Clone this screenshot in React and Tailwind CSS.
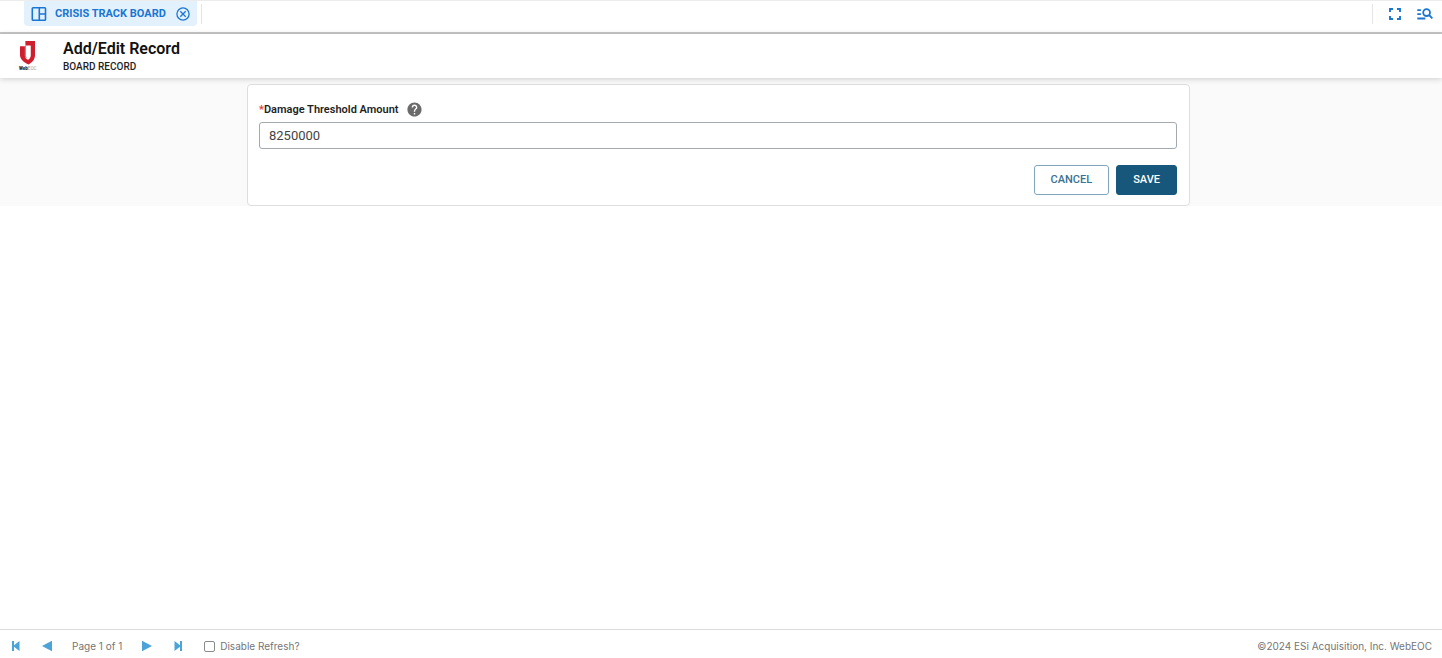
import React from "react";

function BoardIcon() {
  return (
    <svg viewBox="0 0 16 16" className="size-4" fill="none" stroke="currentColor" strokeWidth="1.6" aria-hidden="true">
      <rect x="1.3" y="1.8" width="13.2" height="12.4" rx="0.8" />
      <path d="M8.300 1.800v12.400M8.300 8h6.200" />
    </svg>
  );
}

function CloseIcon() {
  return (
    <svg viewBox="0 0 14 14" className="size-3.5" fill="none" stroke="currentColor" strokeWidth="1.3" aria-hidden="true">
      <circle cx="7" cy="7" r="6.1" />
      <path d="M4.3 4.3l5.4 5.4M9.7 4.3L4.3 9.7" />
    </svg>
  );
}

function FullscreenIcon() {
  return (
    <svg viewBox="0 0 12 12" className="size-3" fill="none" stroke="currentColor" strokeWidth="1.9" aria-hidden="true">
      <path d="M1 4V1h3M8 1h3v3M11 8v3H8M4 11H1V8" />
    </svg>
  );
}

function SearchListIcon() {
  return (
    <svg viewBox="0 0 16 12" className="h-3 w-4" fill="none" stroke="currentColor" strokeWidth="1.8" aria-hidden="true">
      <path d="M0.3 2.200h3.600M0.3 6.200h3.600M0.3 10.500h8" />
      <circle cx="9.600" cy="4.600" r="3.400" />
      <path d="M12 7l3.400 3.400" />
    </svg>
  );
}

function Logo() {
  return (
    <svg viewBox="0 0 20 30" className="h-[30px] w-5" role="img" aria-label="WebEOC">
      <path
        d="M7.400 0H17v14.200c0 4-2.800 7.300-6.600 9.200C5.200 21.200 2 17.800 2 13.700V5.200h4.900v9.300c0 1.800 1.100 3.300 3 4.200 1.800-.9 2.700-2.300 2.700-4.200V4.600H7.400z"
        fill="#cf1f2f"
      />
      <path d="M7.100 5h5.300v9.600c0 1.700-.9 3.100-2.500 4-1.800-.9-2.800-2.300-2.800-4.100z" fill="#fff" />
      <path d="M7.400 4.700v9.600c0 1.400.4 2.200 1.200 3" fill="none" stroke="#cf1f2f" strokeWidth="0.7" />
      <text x="1" y="28.500" fontSize="4.500" fontWeight="900" fill="#222" fontFamily="Roboto, sans-serif">
        Web<tspan fill="#999" fontWeight="400">EOC</tspan>
      </text>
    </svg>
  );
}

function HelpIcon() {
  return (
    <svg viewBox="0 0 24 24" className="size-[17px]" aria-hidden="true">
      <path
        fill="#6b6b6b"
        d="M12 2C6.480 2 2 6.480 2 12s4.480 10 10 10 10-4.480 10-10S17.520 2 12 2zm1 17h-2v-2h2v2zm2.070-7.750l-.9.920C13.450 12.900 13 13.500 13 15h-2v-.5c0-1.100.45-2.100 1.170-2.830l1.240-1.260c.37-.36.59-.86.59-1.410 0-1.100-.9-2-2-2s-2 .9-2 2H8c0-2.210 1.790-4 4-4s4 1.790 4 4c0 .88-.36 1.680-.93 2.250z"
      />
    </svg>
  );
}

function PagerButton({ label, children }) {
  return (
    <button type="button" aria-label={label} className="flex h-4 w-3 items-center justify-center text-[#4ba3d8]">
      <svg viewBox="0 0 12 12" className="size-3" fill="currentColor" aria-hidden="true">
        {children}
      </svg>
    </button>
  );
}

export default function App() {
  return (
    <div className="flex min-h-screen flex-col bg-white font-['Roboto',sans-serif] text-[#1f1f1f]">
      <nav className="flex h-[34px] items-start justify-between border-t border-b-2 border-t-[#ececec] border-b-[#c6c6c6] pr-[9px] pl-6 text-[#1b76d2]">
        <div className="flex items-center gap-1">
          <div className="flex h-[25px] items-center gap-2 rounded-b bg-[#e3f1fd] px-[7px]">
            <BoardIcon />
            <a href="#board" className="pt-px pr-0.5 text-[11px] font-bold whitespace-nowrap">
              CRISIS TRACK BOARD
            </a>
            <button type="button" aria-label="Close tab" className="flex">
              <CloseIcon />
            </button>
          </div>
          <span className="h-5 w-px bg-[#e4e4e4]" />
        </div>
        <div className="flex h-[26px] items-center gap-4">
          <span className="h-5 w-px bg-[#e4e4e4]" />
          <button type="button" aria-label="Full screen" className="flex">
            <FullscreenIcon />
          </button>
          <button type="button" aria-label="Search" className="flex">
            <SearchListIcon />
          </button>
        </div>
      </nav>

      <header className="relative flex h-11 items-center gap-[25px] bg-white pl-[18px] shadow-[0_1px_6px_rgba(0,0,0,0.18)]">
        <Logo />
        <div className="flex flex-col pt-px">
          <h1 className="text-base leading-5 font-semibold text-[#111]">Add/Edit Record</h1>
          <p className="text-[10px] leading-4 font-medium">BOARD RECORD</p>
        </div>
      </header>

      <main className="flex justify-center bg-[#fafafa] pt-1.5 pr-[5px]">
        <form
          className="flex w-full max-w-[943px] flex-col rounded border border-[#dedede] bg-white pt-4 pr-3 pb-2.5 pl-[11px]"
          onSubmit={(e) => e.preventDefault()}
        >
          <div className="flex h-[17px] items-center gap-[7px]">
            <label htmlFor="threshold" className="pt-px text-[11px] font-semibold">
              <span className="text-[#e53935]">*</span>Damage Threshold Amount
            </label>
            <button type="button" aria-label="Help" className="flex">
              <HelpIcon />
            </button>
          </div>
          <input
            id="threshold"
            type="text"
            defaultValue="8250000"
            className="mt-1 h-[27px] w-full rounded-[3px] border border-[#a3a9ae] px-[9px] text-[13px] text-[#444]"
          />
          <div className="mt-4 flex justify-end gap-[7px]">
            <button type="button" className="h-[30px] rounded-[3px] border border-[#7fa6bf] px-4 text-[11px] font-medium text-[#3b7194]">
              CANCEL
            </button>
            <button type="submit" className="h-[30px] rounded-[3px] border border-[#17577b] bg-[#17577b] px-4 text-[11px] font-medium text-white">
              SAVE
            </button>
          </div>
        </form>
      </main>

      <footer className="mt-auto flex h-[29px] items-center justify-between border-t border-[#dcdcdc] pt-1 pr-2.5 pl-2.5 font-['Inter',sans-serif] text-[10px] text-[#757575]">
        <div className="flex items-center">
          <div className="flex items-center gap-[19px]">
            <PagerButton label="First page">
              <path d="M2 1h2v4.300L9.500 1v10L4 6.700V11H2z" />
            </PagerButton>
            <PagerButton label="Previous page">
              <path d="M1 6l10-5.300v10.600z" />
            </PagerButton>
            <span>Page 1 of 1</span>
            <PagerButton label="Next page">
              <path d="M11 6L1 .7v10.600z" />
            </PagerButton>
            <PagerButton label="Last page">
              <path d="M10 1H8v4.300L2.500 1v10L8 6.700V11h2z" />
            </PagerButton>
          </div>
          <label className="ml-5 flex items-center gap-[5px] pt-px">
            <input type="checkbox" className="size-[11px] appearance-none rounded-[2px] border border-[#8a8a8a] bg-white checked:bg-[#4ba3d8]" />
            Disable Refresh?
          </label>
        </div>
        <span>©2024 ESi Acquisition, Inc. WebEOC</span>
      </footer>
    </div>
  );
}
